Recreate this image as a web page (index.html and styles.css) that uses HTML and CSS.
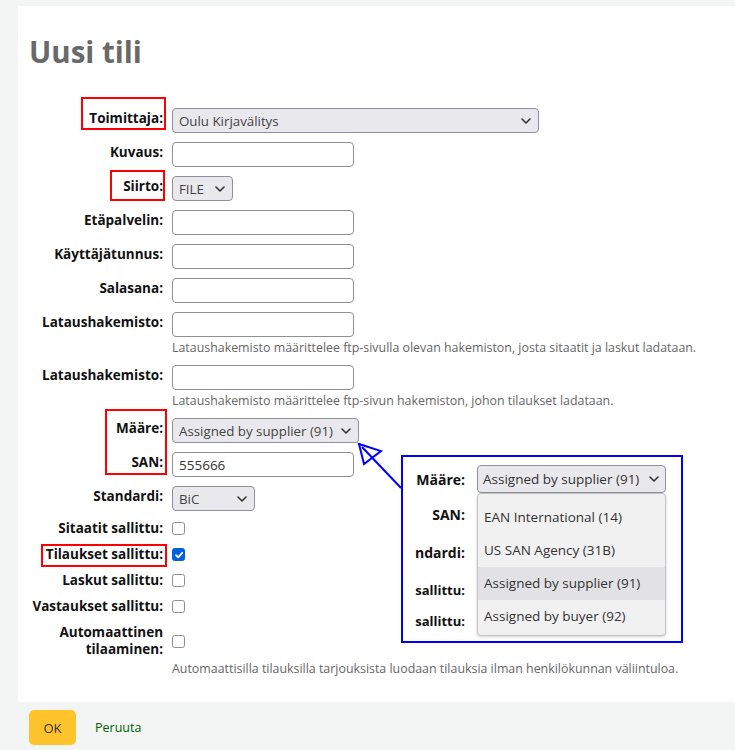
FILE: index.html
```html
<!DOCTYPE html>
<html lang="fi">
<head>
<meta charset="utf-8">
<title>Uusi tili</title>
<link rel="stylesheet" href="styles.css">
</head>
<body>
<main class="page">
  <section class="panel">
    <h1 class="title">Uusi tili</h1>
    <div class="form">
      <div class="row">
        <span class="lbl">Toimittaja:</span>
        <div class="select w-supplier"><span>Oulu Kirjavälitys</span><svg class="chev" viewBox="0 0 10 6"><path d="M1 1 L5 5 L9 1"/></svg></div>
      </div>
      <div class="row">
        <span class="lbl">Kuvaus:</span>
        <div class="input"></div>
      </div>
      <div class="row">
        <span class="lbl">Siirto:</span>
        <div class="select w-file"><span>FILE</span><svg class="chev" viewBox="0 0 10 6"><path d="M1 1 L5 5 L9 1"/></svg></div>
      </div>
      <div class="row">
        <span class="lbl">Etäpalvelin:</span>
        <div class="input"></div>
      </div>
      <div class="row">
        <span class="lbl">Käyttäjätunnus:</span>
        <div class="input"></div>
      </div>
      <div class="row">
        <span class="lbl">Salasana:</span>
        <div class="input"></div>
      </div>
      <div class="row">
        <span class="lbl">Lataushakemisto:</span>
        <div class="input"></div>
        <p class="hint">Lataushakemisto määrittelee ftp-sivulla olevan hakemiston, josta sitaatit ja laskut ladataan.</p>
      </div>
      <div class="row">
        <span class="lbl">Lataushakemisto:</span>
        <div class="input"></div>
        <p class="hint">Lataushakemisto määrittelee ftp-sivun hakemiston, johon tilaukset ladataan.</p>
      </div>
      <div class="row">
        <span class="lbl">Määre:</span>
        <div class="select w-maare"><span>Assigned by supplier (91)</span><svg class="chev" viewBox="0 0 10 6"><path d="M1 1 L5 5 L9 1"/></svg></div>
      </div>
      <div class="row">
        <span class="lbl">SAN:</span>
        <div class="input">555666</div>
      </div>
      <div class="row">
        <span class="lbl">Standardi:</span>
        <div class="select w-std"><span>BiC</span><svg class="chev" viewBox="0 0 10 6"><path d="M1 1 L5 5 L9 1"/></svg></div>
      </div>
      <div class="row check">
        <span class="lbl">Sitaatit sallittu:</span>
        <span class="cb"></span>
      </div>
      <div class="row check">
        <span class="lbl">Tilaukset sallittu:</span>
        <span class="cb on"><svg viewBox="0 0 10 10"><path d="M2 5.2 L4.2 7.3 L8.2 2.8"/></svg></span>
      </div>
      <div class="row check">
        <span class="lbl">Laskut sallittu:</span>
        <span class="cb"></span>
      </div>
      <div class="row check">
        <span class="lbl">Vastaukset sallittu:</span>
        <span class="cb"></span>
      </div>
      <div class="row check">
        <span class="lbl">Automaattinen<br>tilaaminen:</span>
        <span class="cb"></span>
        <p class="hint">Automaattisilla tilauksilla tarjouksista luodaan tilauksia ilman henkilökunnan väliintuloa.</p>
      </div>
    </div>
  </section>

  <div class="actions">
    <button class="ok" type="button">OK</button>
    <a class="cancel" href="#">Peruuta</a>
  </div>

  <div class="mark m1"></div>
  <div class="mark m2"></div>
  <div class="mark m3"></div>
  <div class="mark m4"></div>

  <svg class="arrow" width="735" height="750" viewBox="0 0 735 750">
    <line x1="401" y1="488" x2="362" y2="447"/>
    <polygon points="359,444 381,451 364,464"/>
  </svg>

  <div class="callout">
    <div class="c-labels">
      <span class="c-lbl">Määre:</span>
      <span class="c-lbl">SAN:</span>
      <span class="c-lbl">ndardi:</span>
      <span class="c-lbl">sallittu:</span>
      <span class="c-lbl">sallittu:</span>
    </div>
    <div class="dd">
      <div class="dd-select"><span>Assigned by supplier (91)</span><svg class="chev" viewBox="0 0 10 6"><path d="M1 1 L5 5 L9 1"/></svg></div>
      <div class="dd-list">
        <div class="opt">EAN International (14)</div>
        <div class="opt">US SAN Agency (31B)</div>
        <div class="opt hl">Assigned by supplier (91)</div>
        <div class="opt">Assigned by buyer (92)</div>
      </div>
    </div>
  </div>
</main>
</body>
</html>
```

FILE: styles.css
```css
* { box-sizing: border-box; }
html, body { margin: 0; padding: 0; }
body {
  background: #f3f4f4;
  font-family: "Open Sans", "Noto Sans", sans-serif;
  color: #111;
  width: 735px;
  height: 750px;
  overflow: hidden;
}
.page { position: relative; padding-top: 6px; height: 750px; }
.panel {
  margin-left: 18px;
  background: #fff;
  padding: 0 0 25px 12px;
}
.title {
  margin: 0 0 36px -1px;
  padding-top: 26px;
  font-size: 29.5px;
  line-height: 40px;
  font-weight: 700;
  color: #696969;
}
.form { display: flex; flex-direction: column; gap: 9px; }
.row {
  display: grid;
  grid-template-columns: 133px 1fr;
  column-gap: 9px;
  align-items: start;
}
.lbl {
  text-align: right;
  font-weight: 700;
  font-size: 13.5px;
  line-height: 21px;
  color: #111;
}
.hint {
  grid-column: 2;
  margin: 3px 0 0;
  font-size: 12.4px;
  line-height: 16px;
  color: #666;
  white-space: nowrap;
}
.input {
  width: 182px;
  height: 25px;
  border: 1px solid #8f8f9d;
  border-radius: 4px;
  background: #fff;
  padding: 0 6px;
  font-size: 13.5px;
  color: #333;
  display: flex;
  align-items: center;
}
.select {
  height: 25px;
  border: 1px solid #8f8f9d;
  border-radius: 4px;
  background: #e9e9ed;
  display: flex;
  align-items: center;
  justify-content: space-between;
  padding: 0 7px 0 6px;
  font-size: 13.3px;
  color: #444;
  white-space: nowrap;
}
.w-supplier { width: 367px; }
.w-file { width: 61px; }
.w-maare { width: 187px; }
.w-std { width: 83px; }
.chev { width: 10px; height: 6px; flex: none; }
.chev path { fill: none; stroke: #333; stroke-width: 1.6; stroke-linecap: round; stroke-linejoin: round; }

.row.check { align-items: center; }
.row.check .lbl { line-height: 17px; }
.cb {
  width: 13px;
  height: 13px;
  border: 1.5px solid #8f8f9d;
  border-radius: 2.5px;
  background: #fff;
  display: flex;
  align-items: center;
  justify-content: center;
}
.cb.on { background: #0060df; border-color: #0060df; }
.cb svg { width: 10px; height: 10px; }
.cb svg path { fill: none; stroke: #fff; stroke-width: 1.8; stroke-linecap: round; stroke-linejoin: round; }

.actions {
  display: flex;
  align-items: center;
  gap: 19px;
  padding: 8px 0 0 29px;
}
.ok {
  width: 47px;
  height: 35px;
  border: 0;
  border-radius: 5px;
  background: #ffc32b;
  font-family: inherit;
  font-size: 13px;
  color: #333;
  padding: 0;
}
.cancel {
  font-size: 12.5px;
  color: #006100;
  text-decoration: none;
}

.mark { position: absolute; border: 2px solid #f00; }
.m1 { left: 81px; top: 97px; width: 85px; height: 33px; }
.m2 { left: 110px; top: 170px; width: 55px; height: 31px; }
.m3 { left: 105px; top: 409px; width: 62px; height: 66px; }
.m4 { left: 41px; top: 544px; width: 126px; height: 23px; }

.arrow { position: absolute; left: 0; top: 0; pointer-events: none; }
.arrow line, .arrow polygon { stroke: #00f; stroke-width: 2; fill: none; }

.callout {
  position: absolute;
  left: 401px;
  top: 455px;
  width: 282px;
  height: 188px;
  border: 2px solid #00f;
  background: #fff;
  display: flex;
  gap: 12px;
  padding: 8px 0 0 6px;
}
.c-labels { width: 56px; display: flex; flex-direction: column; }
.c-lbl {
  text-align: right;
  white-space: nowrap;
  height: 20px;
  line-height: 20px;
  font-size: 14px;
  font-weight: 700;
  color: #111;
}
.c-lbl:nth-child(1) { margin-top: 5px; }
.c-lbl:nth-child(2) { margin-top: 15px; }
.c-lbl:nth-child(3) { margin-top: 18px; }
.c-lbl:nth-child(4) { margin-top: 17px; font-size: 13px; }
.c-lbl:nth-child(5) { margin-top: 11px; font-size: 13px; }
.dd { width: 189px; }
.dd-select {
  height: 28px;
  border: 1px solid #8f8f9d;
  border-radius: 4px;
  background: #e9e9ed;
  display: flex;
  align-items: center;
  justify-content: space-between;
  padding: 0 6px 0 5px;
  font-size: 13.5px;
  color: #333;
  white-space: nowrap;
}
.dd-list {
  border: 1px solid #c4c4c8;
  border-radius: 4px;
  background: #f1f1f1;
  padding: 7px 0 2px;
  box-shadow: 0 1px 3px rgba(0,0,0,0.18);
}
.opt {
  height: 33px;
  line-height: 33px;
  padding-left: 6px;
  font-size: 13.5px;
  color: #333;
  white-space: nowrap;
}
.opt.hl { background: #e2e2e4; }
```
